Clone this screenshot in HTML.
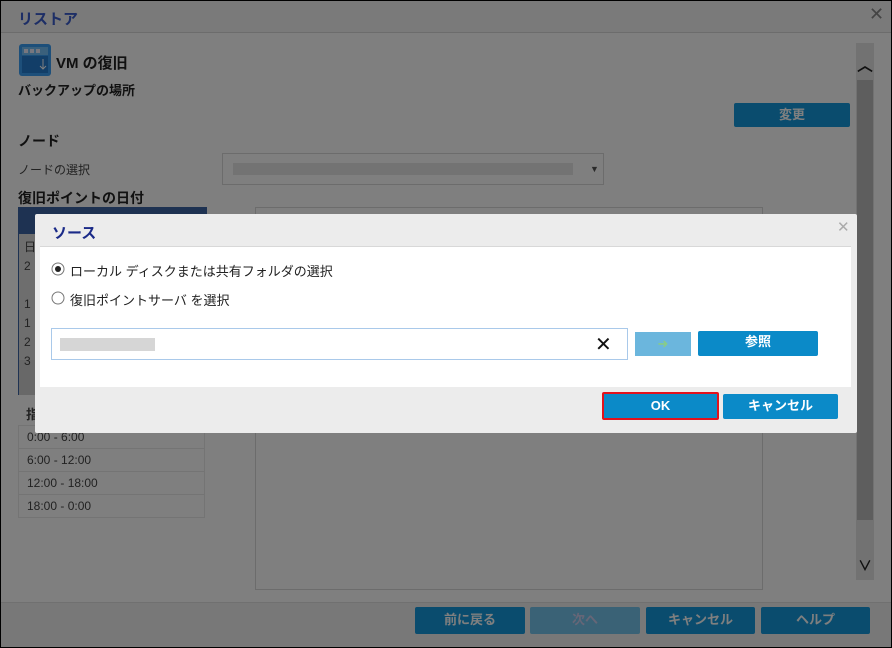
<!DOCTYPE html>
<html><head><meta charset="utf-8"><style>
*{margin:0;padding:0;box-sizing:border-box}
body{width:892px;height:648px;overflow:hidden;background:#000;font-family:"Liberation Sans","Noto Sans CJK JP",sans-serif;position:relative}
.a{position:absolute}
.b{color:#222;font-weight:bold}
.btn{position:absolute;background:#1499dc;color:#fff;font-size:13px;font-weight:bold;text-align:center;line-height:26px;border-radius:2px}
.dbtn{position:absolute;background:#0b8ac8;color:#fff;font-size:13px;font-weight:bold;text-align:center;border-radius:2px}
.row{position:absolute;left:18px;width:187px;height:24px;border:1px solid #e8e8e8;font-size:12px;color:#444;padding-left:8px;line-height:22px}
</style></head><body>
<div class="a" style="left:1px;top:1px;width:890px;height:646px;background:#fff"></div>
<div class="a" style="left:1px;top:1px;width:890px;height:32px;background:#f4f4f4;border-bottom:1px solid #d8d8d8"></div>
<div class="a" style="left:18px;top:8px;font-size:15px;font-weight:bold;color:#3a5ccc">リストア</div>
<div class="a" style="left:869px;top:4px;font-size:18px;color:#888">✕</div>
<div class="a" style="left:856px;top:43px;width:18px;height:537px;background:#e4e4e4"></div>
<div class="a" style="left:857px;top:80px;width:16px;height:440px;background:#bcbcbc"></div>
<div class="a" style="left:857px;top:52px;font-size:16px;color:#222;font-weight:bold">︿</div>
<div class="a" style="left:858px;top:556px;font-size:14px;color:#222;font-weight:bold">∨</div>
<svg class="a" style="left:19px;top:44px" width="32" height="32"><rect x="0" y="0" width="32" height="32" rx="3" fill="#3a9ef4"/><rect x="3" y="3" width="26" height="8" fill="#74c0f8"/><rect x="5" y="5" width="4" height="4" fill="#eef"/><rect x="11" y="5" width="4" height="4" fill="#eef"/><rect x="17" y="5" width="4" height="4" fill="#eef"/><rect x="3" y="12" width="26" height="17" fill="#247cd0"/><path d="M24 15v10M21 22l3 3 3-3" stroke="#fff" fill="none"/></svg>
<div class="a b" style="left:56px;top:52px;font-size:15px">VM の復旧</div>
<div class="a b" style="left:18px;top:80px;font-size:13px">バックアップの場所</div>
<div class="btn" style="left:734px;top:103px;width:116px;height:24px;line-height:24px">変更</div>
<div class="a b" style="left:18px;top:131px;font-size:14px">ノード</div>
<div class="a" style="left:18px;top:161px;font-size:12px;color:#444">ノードの選択</div>
<div class="a" style="left:222px;top:153px;width:382px;height:32px;border:1px solid #d8d8d8;background:#fff"></div>
<div class="a" style="left:233px;top:163px;width:340px;height:12px;background:#e6e6e6"></div>
<div class="a" style="left:590px;top:164px;font-size:9px;color:#555">▼</div>
<div class="a b" style="left:18px;top:188px;font-size:14px">復旧ポイントの日付</div>
<div class="a" style="left:18px;top:207px;width:189px;height:188px;background:#dcdcdc;border:1px solid #3c64a4"></div>
<div class="a" style="left:19px;top:208px;width:187px;height:26px;background:#3c64a4"></div>
<div class="a" style="left:19px;top:360px;width:187px;height:35px;background:#d0d0d0"></div>
<div class="a" style="left:24px;top:238px;font-size:12px;color:#444;line-height:19px">日<br>2<br><br>1<br>1<br>2<br>3</div>
<div class="a" style="left:26px;top:404px;font-size:13px;color:#444;font-weight:bold">指</div>
<div class="row" style="top:425px">0:00 - 6:00</div>
<div class="row" style="top:448px">6:00 - 12:00</div>
<div class="row" style="top:471px">12:00 - 18:00</div>
<div class="row" style="top:494px">18:00 - 0:00</div>
<div class="a" style="left:255px;top:207px;width:508px;height:383px;border:1px solid #d8d8d8"></div>
<div class="a" style="left:1px;top:602px;width:890px;height:45px;background:#f0f0f0;border-top:1px solid #e0e0e0"></div>
<div class="btn" style="left:415px;top:607px;width:110px;height:27px">前に戻る</div>
<div class="btn" style="left:530px;top:607px;width:110px;height:27px;background:#74c4ec;color:#cce">次へ</div>
<div class="btn" style="left:646px;top:607px;width:109px;height:27px">キャンセル</div>
<div class="btn" style="left:761px;top:607px;width:109px;height:27px">ヘルプ</div>
<div class="a" style="left:1px;top:1px;width:890px;height:646px;background:rgba(0,0,0,0.5)"></div>

<div class="a" style="left:35px;top:214px;width:822px;height:219px;background:#ececec;border-radius:2px"></div>
<div class="a" style="left:52px;top:222px;font-size:15px;font-weight:bold;color:#1a2a88">ソース</div>
<div class="a" style="left:837px;top:218px;font-size:15px;color:#aaa">✕</div>
<div class="a" style="left:40px;top:246px;width:811px;height:141px;background:#fff;border-top:1px solid #d8d8d8"></div>
<svg class="a" style="left:51px;top:262px" width="14" height="14"><circle cx="7" cy="7" r="6" fill="#fff" stroke="#777"/><circle cx="7" cy="7" r="3" fill="#222"/></svg>
<div class="a" style="left:70px;top:261px;font-size:13px;color:#222">ローカル ディスクまたは共有フォルダの選択</div>
<svg class="a" style="left:51px;top:291px" width="14" height="14"><circle cx="7" cy="7" r="6" fill="#fff" stroke="#777"/></svg>
<div class="a" style="left:70px;top:290px;font-size:13px;color:#222">復旧ポイントサーバ を選択</div>
<div class="a" style="left:51px;top:328px;width:577px;height:32px;border:1px solid #a9c9ea"></div>
<div class="a" style="left:60px;top:338px;width:95px;height:13px;background:#d6d6d6"></div>
<div class="a" style="left:595px;top:332px;font-size:20px;color:#111">✕</div>
<div class="a" style="left:635px;top:332px;width:56px;height:24px;background:#6bb6dd;color:#8c8;text-align:center;line-height:24px;font-size:13px">➜</div>
<div class="dbtn" style="left:698px;top:331px;width:120px;height:25px;line-height:22px">参照</div>
<div class="dbtn" style="left:602px;top:392px;width:117px;height:28px;border:2px solid #e3121c;line-height:24px">OK</div>
<div class="dbtn" style="left:723px;top:394px;width:115px;height:25px;line-height:24px">キャンセル</div>
</body></html>
